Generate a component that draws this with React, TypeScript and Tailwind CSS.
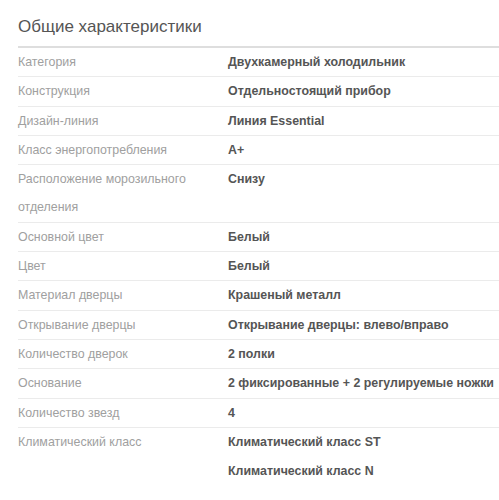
import React from "react";

const rows: { label: string; value: string[] }[] = [
  { label: "Категория", value: ["Двухкамерный холодильник"] },
  { label: "Конструкция", value: ["Отдельностоящий прибор"] },
  { label: "Дизайн-линия", value: ["Линия Essential"] },
  { label: "Класс энергопотребления", value: ["A+"] },
  { label: "Расположение морозильного отделения", value: ["Снизу"] },
  { label: "Основной цвет", value: ["Белый"] },
  { label: "Цвет", value: ["Белый"] },
  { label: "Материал дверцы", value: ["Крашеный металл"] },
  { label: "Открывание дверцы", value: ["Открывание дверцы: влево/вправо"] },
  { label: "Количество дверок", value: ["2 полки"] },
  { label: "Основание", value: ["2 фиксированные + 2 регулируемые ножки"] },
  { label: "Количество звезд", value: ["4"] },
  { label: "Климатический класс", value: ["Климатический класс ST", "Климатический класс N"] },
];

export default function App() {
  return (
    <div
      className="w-[499px] h-[500px] bg-white overflow-hidden pl-[18px]"
      style={{ fontFamily: '"Liberation Sans", Arial, sans-serif' }}
    >
      <h2 className="pt-[17px] pb-[9px] text-[17px] leading-[20px] text-[#555] border-b-2 border-[#dedede] w-[560px]">
        Общие характеристики
      </h2>
      <div className="w-[560px]">
        {rows.map((r, i) => (
          <div
            key={i}
            className={`flex text-[12.4px] leading-[28.3px] ${i < rows.length - 1 ? "border-b border-[#ebebeb]" : ""}`}
          >
            <div className="w-[210px] shrink-0 text-[#a0a0a0] pr-[24px]">{r.label}</div>
            <div className="flex-1 font-bold text-[#555]">
              {r.value.map((v, j) => (
                <div key={j} className={j > 0 ? "mt-[1px]" : ""}>
                  {v}
                </div>
              ))}
            </div>
          </div>
        ))}
      </div>
    </div>
  );
}
